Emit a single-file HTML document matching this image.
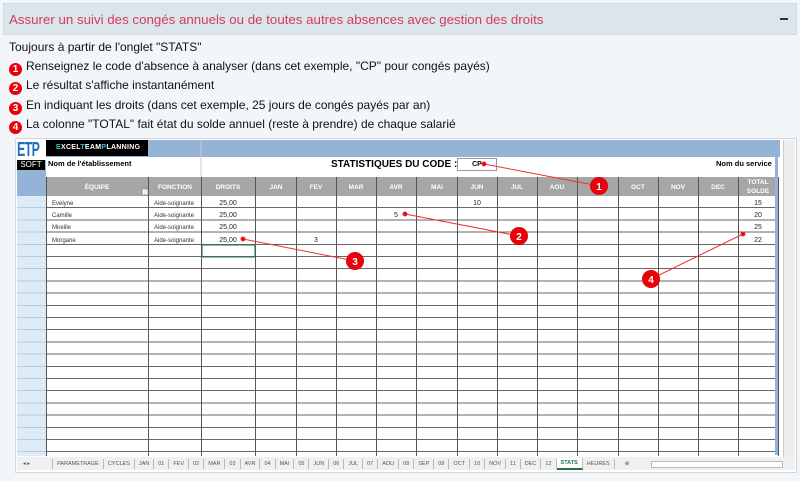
<!DOCTYPE html>
<html><head><meta charset="utf-8"><style>
*{margin:0;padding:0;box-sizing:border-box}
body{width:800px;height:481px;background:#f2f6f9;font-family:"Liberation Sans",sans-serif;position:relative;overflow:hidden}
.tb{position:absolute;left:3px;top:3px;width:794px;height:32px;background:#dbe5ec;border:1px dotted #c5d0da}
.tb span{position:absolute;left:5px;top:8px;font-size:13.3px;color:#d63a5e}
.tb i{position:absolute;right:8px;top:14px;width:8px;height:2px;background:#333}
.ln{position:absolute;left:9px;font-size:12px;color:#111;white-space:nowrap}
.n{display:inline-block;width:13px;height:13px;border-radius:50%;background:#e8000b;color:#fff;font-size:10px;font-weight:bold;text-align:center;line-height:13px;margin-right:4px;vertical-align:-2px}
.abs{position:absolute}
.tabs{position:absolute;left:17px;top:458px;height:12px;display:flex;font-size:5.5px;color:#555;align-items:center}
.tabs span{padding:0 4px;border-right:1px solid #bbb;line-height:10px}
</style></head><body>
<div class="tb"><span>Assurer un suivi des congés annuels ou de toutes autres absences avec gestion des droits</span><i></i></div>
<div class="ln" style="top:40px">Toujours à partir de l'onglet "STATS"</div>
<div class="ln" style="top:59px"><span class="n">1</span>Renseignez le code d'absence à analyser (dans cet exemple, "CP" pour congés payés)</div>
<div class="ln" style="top:78px"><span class="n">2</span>Le résultat s'affiche instantanément</div>
<div class="ln" style="top:98px"><span class="n">3</span>En indiquant les droits (dans cet exemple, 25 jours de congés payés par an)</div>
<div class="ln" style="top:117px"><span class="n">4</span>La colonne "TOTAL" fait état du solde annuel (reste à prendre) de chaque salarié</div>

<div class="abs" style="left:15px;top:138px;width:782px;height:335px;background:#fff;border:1px solid #d0d7de"></div>
<div class="abs" style="left:17px;top:140px;width:763px;height:17px;background:#95b3d7"></div>
<div class="abs" style="left:17px;top:140px;width:29px;height:316px;background:#ddebf7;background-image:repeating-linear-gradient(to bottom,transparent 0 11.2px,#b8cce0 11.2px 12.2px);background-position:0 56px"></div>
<div class="abs" style="left:17px;top:140px;width:29px;height:56px;background:#95b3d7"></div>
<div class="abs" style="left:17px;top:140px;width:29px;height:20px;background:#fff;overflow:hidden"><div style="color:#1f6fc0;font:bold 20px 'Liberation Sans',sans-serif;line-height:20px;transform:scaleX(.62);transform-origin:0 0;letter-spacing:-1px">ETP</div></div>
<div class="abs" style="left:17px;top:160px;width:28px;height:10px;background:#000;color:#fff;font-size:8px;text-align:center;line-height:10px">SOFT</div>
<div class="abs" style="left:46px;top:140px;width:102px;height:16px;background:#000;color:#fff;font:bold 7px sans-serif;line-height:16px;padding-left:10px;letter-spacing:.3px"><span style="color:#2ec4d6">E</span>XCEL<span style="color:#2ec4d6">T</span>EAM<span style="color:#2ec4d6">P</span>LANNING</div>
<div class="abs" style="left:46px;top:157px;width:732px;height:20px;background:#fff"></div>
<div class="abs" style="left:48px;top:159px;font:bold 7.5px sans-serif">Nom de l'établissement</div>
<div class="abs" style="left:331px;top:159px;font:bold 10px sans-serif">STATISTIQUES DU CODE :</div>
<div class="abs" style="left:457px;top:158px;width:40px;height:13px;border:1px solid #999;font:bold 7px sans-serif;text-align:center;line-height:11px">CP</div>
<div class="abs" style="left:716px;top:159px;font:bold 7.5px sans-serif">Nom du service</div>
<div class="abs" style="left:46px;top:177px;width:732px;height:19px;background:#a6a6a6"></div>
<div class="abs" style="left:46px;top:196px;width:732px;height:260px;background-image:repeating-linear-gradient(to bottom,transparent 0 11.2px,#666 11.2px 12.2px)"></div>
<div class="abs" style="left:783px;top:140px;width:12px;height:318px;background:#eee;border-left:1px solid #ccc"></div>
<div class="abs" style="left:775px;top:150px;width:3px;height:305px;background:#95b3d7"></div>

<svg class="abs" style="left:0;top:0" width="800" height="481">
<g stroke="#555" stroke-width="1">
<line x1="201" y1="140" x2="201" y2="177" stroke="#ccc"/>
<line x1="46.5" y1="177" x2="46.5" y2="456"/><line x1="148.5" y1="177" x2="148.5" y2="456"/><line x1="201.5" y1="177" x2="201.5" y2="456"/><line x1="255.5" y1="177" x2="255.5" y2="456"/><line x1="296.5" y1="177" x2="296.5" y2="456"/><line x1="336.5" y1="177" x2="336.5" y2="456"/><line x1="376.5" y1="177" x2="376.5" y2="456"/><line x1="416.5" y1="177" x2="416.5" y2="456"/><line x1="457.5" y1="177" x2="457.5" y2="456"/><line x1="497.5" y1="177" x2="497.5" y2="456"/><line x1="537.5" y1="177" x2="537.5" y2="456"/><line x1="577.5" y1="177" x2="577.5" y2="456"/><line x1="618.5" y1="177" x2="618.5" y2="456"/><line x1="658.5" y1="177" x2="658.5" y2="456"/><line x1="698.5" y1="177" x2="698.5" y2="456"/><line x1="738.5" y1="177" x2="738.5" y2="456"/><line x1="778.5" y1="177" x2="778.5" y2="456"/>
</g>
<rect x="202" y="245" width="53" height="12" fill="none" stroke="#217346" stroke-width="1"/>
<rect x="142" y="189" width="6" height="6" fill="#eee" stroke="#777" stroke-width=".5"/>
<g font-family="Liberation Sans,sans-serif" font-size="6.5" font-weight="bold" fill="#fff" text-anchor="middle">
<text x="97" y="189">ÉQUIPE</text><text x="175" y="189">FONCTION</text><text x="228" y="189">DROITS</text><text x="276" y="189">JAN</text><text x="316" y="189">FEV</text><text x="356" y="189">MAR</text><text x="396" y="189">AVR</text><text x="437" y="189">MAI</text><text x="477" y="189">JUN</text><text x="517" y="189">JUL</text><text x="557" y="189">AOU</text><text x="638" y="189">OCT</text><text x="678" y="189">NOV</text><text x="718" y="189">DEC</text><text x="758" y="184">TOTAL</text><text x="758" y="193">SOLDE</text>
</g>
<g font-family="Liberation Sans,sans-serif" font-size="6" fill="#333">
<text x="52" y="205">Evelyne</text><text x="52" y="217">Camille</text><text x="52" y="229">Mireille</text><text x="52" y="242">Morgane</text>
<text x="154" y="205">Aide-soignante</text><text x="154" y="217">Aide-soignante</text><text x="154" y="229">Aide-soignante</text><text x="154" y="242">Aide-soignante</text>
</g>
<g font-family="Liberation Sans,sans-serif" font-size="7" fill="#222" text-anchor="middle">
<text x="228" y="205">25,00</text><text x="228" y="217">25,00</text><text x="228" y="229">25,00</text><text x="228" y="242">25,00</text>
<text x="477" y="205">10</text><text x="396" y="217">5</text><text x="316" y="242">3</text>
<text x="758" y="205">15</text><text x="758" y="217">20</text><text x="758" y="229">25</text><text x="758" y="242">22</text>
</g>
<g stroke="#f03030" stroke-width="1" fill="#e8000b">
<line x1="484" y1="164" x2="599" y2="186"/><line x1="405" y1="214" x2="519" y2="236"/><line x1="243" y1="239" x2="355" y2="261"/><line x1="743" y1="234" x2="651" y2="279"/>
<circle cx="484" cy="164" r="2"/><circle cx="405" cy="214" r="2"/><circle cx="243" cy="239" r="2"/><circle cx="743" cy="234" r="2"/>
<circle cx="599" cy="186" r="9" stroke="none"/><circle cx="519" cy="236" r="9" stroke="none"/><circle cx="355" cy="261" r="9" stroke="none"/><circle cx="651" cy="279" r="9" stroke="none"/>
</g>
<g font-family="Liberation Sans,sans-serif" font-size="10" font-weight="bold" fill="#fff" text-anchor="middle">
<text x="599" y="190">1</text><text x="519" y="240">2</text><text x="355" y="265">3</text><text x="651" y="283">4</text>
</g>
</svg>
<div class="abs" style="left:17px;top:457px;width:778px;height:13px;background:#f0f0f0"></div>
<div class="tabs"><span style="border:none;padding:0 22px 0 6px">◂ ▸</span><span style="border-left:1px solid #bbb">PARAMETRAGE</span><span>CYCLES</span><span>JAN</span><span>01</span><span>FEV</span><span>02</span><span>MAR</span><span>03</span><span>AVR</span><span>04</span><span>MAI</span><span>05</span><span>JUN</span><span>06</span><span>JUL</span><span>07</span><span>AOU</span><span>08</span><span>SEP</span><span>09</span><span>OCT</span><span>10</span><span>NOV</span><span>11</span><span>DEC</span><span>12</span><span style="color:#217346;font-weight:bold;background:#fff;border-bottom:2px solid #217346">STATS</span><span>HEURES</span><span style="border:none;padding:0 10px">⊕</span></div>
<div class="abs" style="left:651px;top:461px;width:132px;height:7px;background:#fff;border:1px solid #bbb"></div>
</body></html>
